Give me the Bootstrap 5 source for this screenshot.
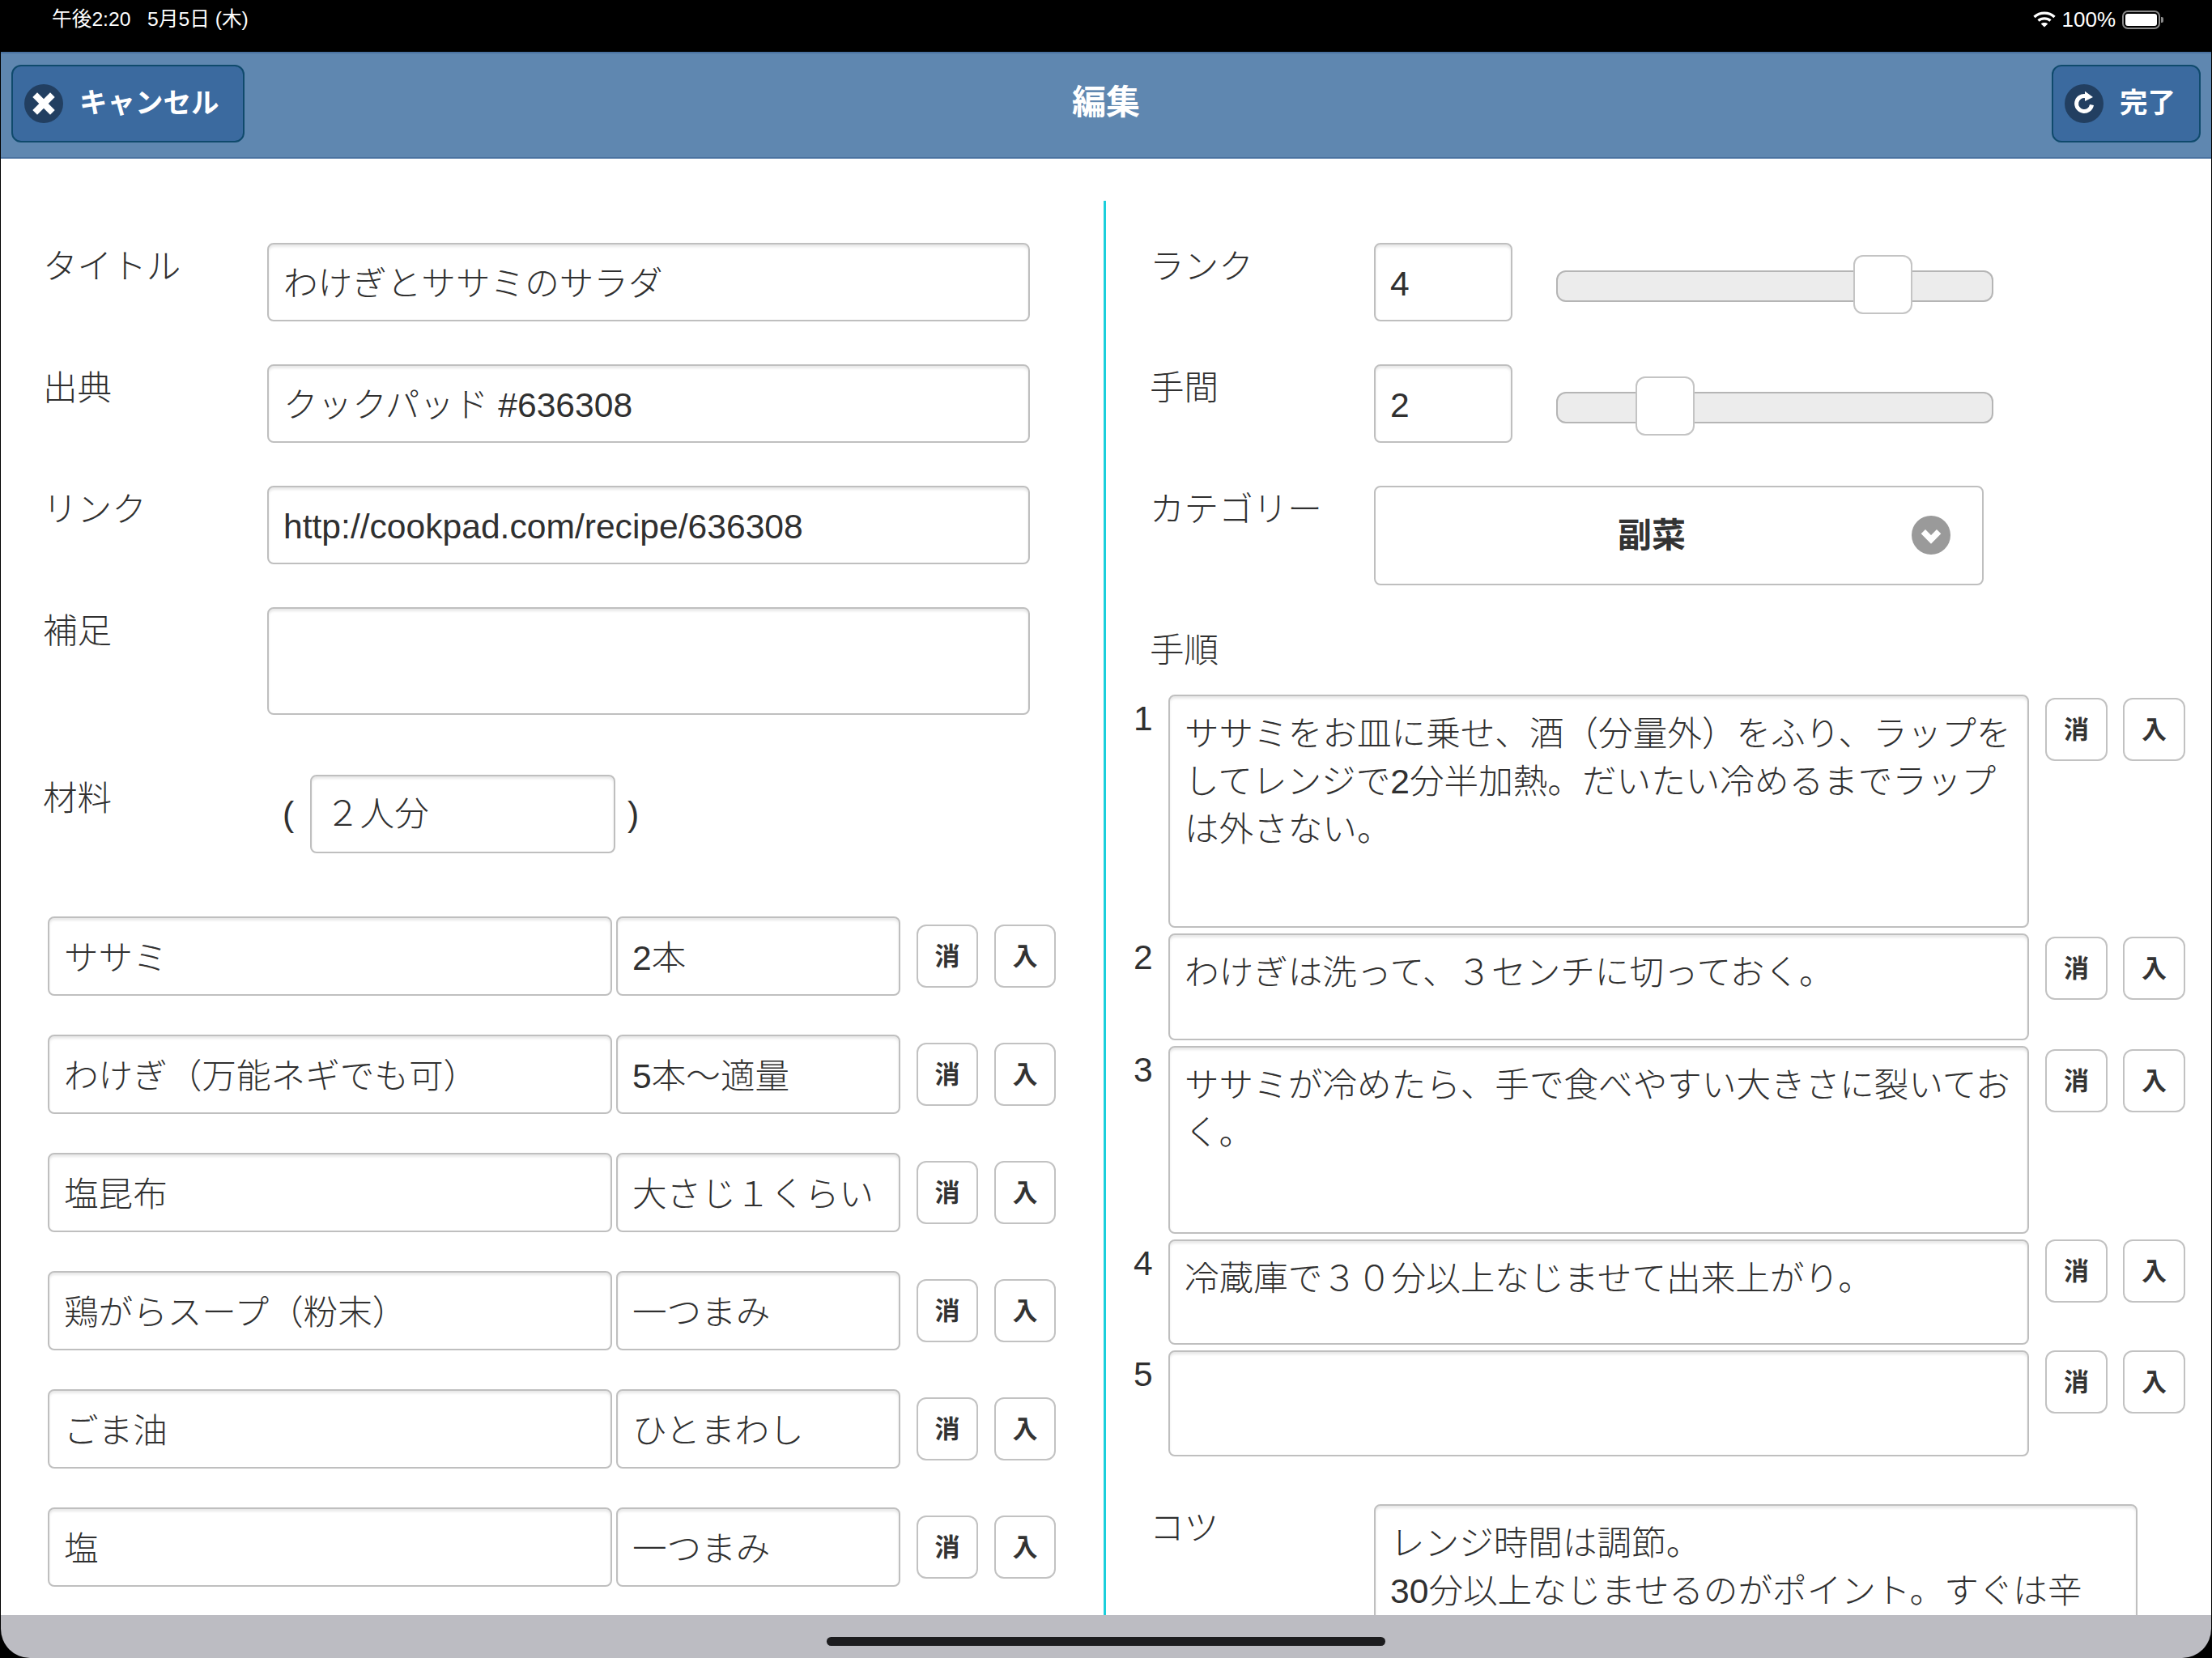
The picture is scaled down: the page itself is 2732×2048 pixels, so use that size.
<!DOCTYPE html>
<html lang="ja">
<head>
    <meta charset="UTF-8">
    <meta name="viewport" content="width=device-width, initial-scale=1.0">
    <title>編集</title>
    <link href="https://cdn.jsdelivr.net/npm/bootstrap@5.3.0/dist/css/bootstrap.min.css" rel="stylesheet">
    <style>
        html, body { height: 100%; background: #000; }
        body { font-family: "Liberation Sans", "Noto Sans CJK JP", sans-serif; font-size: 42.6px; font-weight: 300; line-height: 59px; color: #303030; overflow: hidden; }
        .screen { width: 2732px; height: 2048px; background: #000; }
        .status-bar { height: 64px; padding: 0 64px 16px 64px; color: #fff; font-size: 24.7px; font-weight: 400; line-height: 48px; }
        .status-right { font-size: 26px; gap: 8px; }
        .battery { width: 47px; height: 23px; border: 2px solid #8a8a8a; border-radius: 7px; padding: 2px; position: relative; }
        .battery i { display: block; height: 100%; background: #fff; border-radius: 3px; }
        .battery::after { content: ""; position: absolute; right: -6px; top: 6px; width: 3px; height: 7px; background: #8a8a8a; border-radius: 0 2px 2px 0; }
        .app-header { height: 132px; margin: 0 1px; padding: 0 13px 4px; background: #5f87b0; border-top: 2px solid #4a72a0; border-bottom: 2px solid #4a72a0; display: grid; grid-template-columns: 1fr auto 1fr; align-items: center; }
        .app-title { color: #fff; font-weight: 700; font-size: 42px; margin-top: -4px; }
        .hdr-btn { height: 96px; padding: 0 29px 0 14px; gap: 20px; background: #3b6a9f; border: 2px solid #0f4a6c; border-radius: 12px; color: #fff; font-size: 34.5px; font-weight: 700; }
        .hdr-btn:hover { background: #3b6a9f; color: #fff; border-color: #0f4a6c; }
        .hdr-icon { width: 48px; height: 48px; border-radius: 50%; background: #223f61; flex: none; }
        .main-area { margin: 0 1px; background: #fff; padding-top: 52px; min-height: 0; }
        .col-left { border-right: 3px solid #1bcfdb; padding: 52px 0 0 54px; height: 100%; }
        .col-right { padding-top: 52px; height: 100%; }
        .form-control { font-size: 42.6px; font-weight: 300; line-height: 59px; color: #303030; padding: 12px 18px 16px; background: #fff; border: 2px solid #bfbfbf; border-radius: 8px; box-shadow: inset 0 3px 3px rgba(0,0,0,.09); }
        textarea.form-control { padding-top: 17px; resize: none; overflow: hidden; }
        .form-control.latin-input { padding-top: 16px; padding-bottom: 12px; }
        .fld { margin-bottom: 53px; }
        .fld .form-control { height: 97px; }
        .fld-label { width: 277px; margin-left: -2px; flex: none; }
        .fld-input { width: 942px; }
        .fld .note-input { height: 133px; }
        .serves { margin: 74px 0 78px; }
        .serves .form-control { width: 377px; height: 97px; padding: 10px 18px 18px 17px; }
        .paren { width: 53px; padding: 19px 0 0 19px; }
        .paren-end { padding: 19px 0 0 15px; }
        .ingredient { margin: 0 0 48px 4px; gap: 5px; }
        .ingredient .form-control { height: 98px; }
        .ing-name { width: 697px; }
        .ing-qty { width: 351px; }
        .mini-btn { width: 76px; height: 78px; padding: 0; flex: none; background: #fff; border: 2px solid #c2c2c2; border-radius: 12px; color: #333; font-size: 31px; line-height: 1; font-weight: 700; }
        .ing-btns { gap: 20px; margin-left: 15px; }
        .r-group { padding-left: 54px; }
        .r-label { width: 277px; flex: none; }
        .rank-input { width: 171px; }
        .slider { width: 540px; height: 39px; margin: 34px 0 0 54px; background: #ececec; border: 2px solid #b5b5b5; border-radius: 12px; position: relative; }
        .slider-thumb { position: absolute; top: -21px; width: 73px; height: 73px; background: #fff; border: 2px solid #c4c4c4; border-radius: 12px; }
        .select-box { width: 753px; height: 123px; padding: 0 67px 0 0; background: #fff; border: 2px solid #bfbfbf; border-radius: 8px; color: #333; font-size: 42px; font-weight: 700; position: relative; }
        .select-box:hover { background: #fff; color: #333; border-color: #bfbfbf; }
        .select-icon { position: absolute; right: 39px; top: 35px; width: 48px; height: 48px; border-radius: 50%; background: #9a9a9a; }
        .steps-title { margin: 51px 0 25px; }
        .steps { padding-left: 34px; }
        .step { margin-bottom: 7px; }
        .step-no { width: 43px; flex: none; }
        .step textarea { width: 1063px; flex: none; }
        .step-btns { gap: 19px; margin-left: 20px; }
        .step-btns .mini-btn { width: 77px; }
        .tips { margin-top: 59px; }
        .tips textarea { width: 943px; height: 300px; }
        .home-bar { height: 53px; margin: 0 1px; background: #bcbcc2; padding-top: 27px; border-radius: 0 0 36px 36px; }
        .home-indicator { width: 690px; height: 11px; background: #1c1c1e; border-radius: 6px; }
    </style>
</head>
<body>
    <div class="screen d-flex flex-column">
        <!-- status bar -->
        <div class="status-bar d-flex justify-content-between align-items-center flex-shrink-0">
            <span>午後2:20&nbsp;&nbsp; 5月5日 (木)</span>
            <span class="status-right d-flex align-items-center">
                <svg width="28" height="20" viewBox="0 0 28 20" fill="none" stroke="#fff" stroke-width="3.4"><path d="M1.5 7 C8.5 .5 19.5 .5 26.5 7"/><path d="M6.5 11.5 C10.5 8 17.5 8 21.5 11.5"/><path d="M14 19.5 L9.8 15.4 C12 13.6 16 13.6 18.2 15.4 Z" fill="#fff" stroke="none"/></svg>
                <span>100%</span>
                <span class="battery"><i></i></span>
            </span>
        </div>

        <!-- header -->
        <div class="app-header flex-shrink-0">
            <div>
                <button type="button" class="btn hdr-btn d-inline-flex align-items-center">
                    <span class="hdr-icon d-flex align-items-center justify-content-center">
                        <svg width="32" height="32" viewBox="0 0 28 28"><path d="M7 2 L14 9 L21 2 L26 7 L19 14 L26 21 L21 26 L14 19 L7 26 L2 21 L9 14 L2 7 Z" fill="#fff"/></svg>
                    </span>
                    キャンセル
                </button>
            </div>
            <div class="app-title">編集</div>
            <div class="text-end">
                <button type="button" class="btn hdr-btn d-inline-flex align-items-center">
                    <span class="hdr-icon d-flex">
                        <svg width="48" height="48" viewBox="0 0 48 48" fill="none"><path d="M33.5 25.5 A9.5 9.5 0 1 1 26 14.7" stroke="#fff" stroke-width="5"/><path d="M25 8.7 L35 16 L25 21 Z" fill="#fff"/></svg>
                    </span>
                    完了
                </button>
            </div>
        </div>

        <!-- form -->
        <div class="main-area flex-grow-1 overflow-hidden">
            <div class="row g-0 h-100">
                <div class="col-6 col-left">
                    <div class="fld d-flex"><label class="fld-label">タイトル</label><input class="form-control fld-input" value="わけぎとササミのサラダ"></div>
                    <div class="fld d-flex"><label class="fld-label">出典</label><input class="form-control fld-input" value="クックパッド #636308"></div>
                    <div class="fld d-flex"><label class="fld-label">リンク</label><input class="form-control fld-input latin-input" value="http://cookpad.com/recipe/636308"></div>
                    <div class="fld d-flex mb-0"><label class="fld-label">補足</label><textarea class="form-control fld-input note-input"></textarea></div>

                    <div class="serves d-flex">
                        <label class="fld-label">材料</label>
                        <span class="paren">(</span>
                        <input class="form-control" value="２人分">
                        <span class="paren-end">)</span>
                    </div>

                    <div class="ingredient d-flex align-items-center">
                        <input class="form-control ing-name" value="ササミ"><input class="form-control ing-qty" value="2本">
                        <div class="ing-btns d-flex"><button class="btn mini-btn">消</button><button class="btn mini-btn">入</button></div>
                    </div>
                    <div class="ingredient d-flex align-items-center">
                        <input class="form-control ing-name" value="わけぎ（万能ネギでも可）"><input class="form-control ing-qty" value="5本〜適量">
                        <div class="ing-btns d-flex"><button class="btn mini-btn">消</button><button class="btn mini-btn">入</button></div>
                    </div>
                    <div class="ingredient d-flex align-items-center">
                        <input class="form-control ing-name" value="塩昆布"><input class="form-control ing-qty" value="大さじ１くらい">
                        <div class="ing-btns d-flex"><button class="btn mini-btn">消</button><button class="btn mini-btn">入</button></div>
                    </div>
                    <div class="ingredient d-flex align-items-center">
                        <input class="form-control ing-name" value="鶏がらスープ（粉末）"><input class="form-control ing-qty" value="一つまみ">
                        <div class="ing-btns d-flex"><button class="btn mini-btn">消</button><button class="btn mini-btn">入</button></div>
                    </div>
                    <div class="ingredient d-flex align-items-center">
                        <input class="form-control ing-name" value="ごま油"><input class="form-control ing-qty" value="ひとまわし">
                        <div class="ing-btns d-flex"><button class="btn mini-btn">消</button><button class="btn mini-btn">入</button></div>
                    </div>
                    <div class="ingredient d-flex align-items-center">
                        <input class="form-control ing-name" value="塩"><input class="form-control ing-qty" value="一つまみ">
                        <div class="ing-btns d-flex"><button class="btn mini-btn">消</button><button class="btn mini-btn">入</button></div>
                    </div>
                </div>

                <div class="col-6 col-right">
                    <div class="r-group fld d-flex align-items-start">
                        <label class="r-label">ランク</label>
                        <input class="form-control rank-input latin-input" value="4">
                        <div class="slider"><span class="slider-thumb" style="left:365px"></span></div>
                    </div>
                    <div class="r-group fld d-flex align-items-start">
                        <label class="r-label">手間</label>
                        <input class="form-control rank-input latin-input" value="2">
                        <div class="slider"><span class="slider-thumb" style="left:96px"></span></div>
                    </div>
                    <div class="r-group d-flex align-items-start">
                        <label class="r-label">カテゴリー</label>
                        <button type="button" class="btn select-box">副菜
                            <span class="select-icon d-flex align-items-center justify-content-center">
                                <svg width="30" height="30" viewBox="0 0 28 28" fill="none"><path d="M5 10 L14 19 L23 10" stroke="#fff" stroke-width="7"/></svg>
                            </span>
                        </button>
                    </div>

                    <div class="r-group steps-title">手順</div>
                    <div class="steps">
                        <div class="step d-flex align-items-start">
                            <span class="step-no">1</span>
                            <textarea class="form-control" style="height:288px">ササミをお皿に乗せ、酒（分量外）をふり、ラップをしてレンジで2分半加熱。だいたい冷めるまでラップは外さない。</textarea>
                            <div class="step-btns d-flex mt-1"><button class="btn mini-btn">消</button><button class="btn mini-btn">入</button></div>
                        </div>
                        <div class="step d-flex align-items-start">
                            <span class="step-no">2</span>
                            <textarea class="form-control" style="height:132px">わけぎは洗って、３センチに切っておく。</textarea>
                            <div class="step-btns d-flex mt-1"><button class="btn mini-btn">消</button><button class="btn mini-btn">入</button></div>
                        </div>
                        <div class="step d-flex align-items-start">
                            <span class="step-no">3</span>
                            <textarea class="form-control" style="height:232px">ササミが冷めたら、手で食べやすい大きさに裂いておく。</textarea>
                            <div class="step-btns d-flex mt-1"><button class="btn mini-btn">消</button><button class="btn mini-btn">入</button></div>
                        </div>
                        <div class="step d-flex align-items-start">
                            <span class="step-no">4</span>
                            <textarea class="form-control" style="height:130px">冷蔵庫で３０分以上なじませて出来上がり。</textarea>
                            <div class="step-btns d-flex"><button class="btn mini-btn">消</button><button class="btn mini-btn">入</button></div>
                        </div>
                        <div class="step d-flex align-items-start">
                            <span class="step-no">5</span>
                            <textarea class="form-control" style="height:131px"></textarea>
                            <div class="step-btns d-flex"><button class="btn mini-btn">消</button><button class="btn mini-btn">入</button></div>
                        </div>
                    </div>

                    <div class="r-group tips d-flex align-items-start">
                        <label class="r-label">コツ</label>
                        <textarea class="form-control">レンジ時間は調節。
30分以上なじませるのがポイント。すぐは辛</textarea>
                    </div>
                </div>
            </div>
        </div>

        <!-- home indicator -->
        <div class="home-bar d-flex justify-content-center flex-shrink-0">
            <div class="home-indicator"></div>
        </div>
    </div>
</body>
</html>
